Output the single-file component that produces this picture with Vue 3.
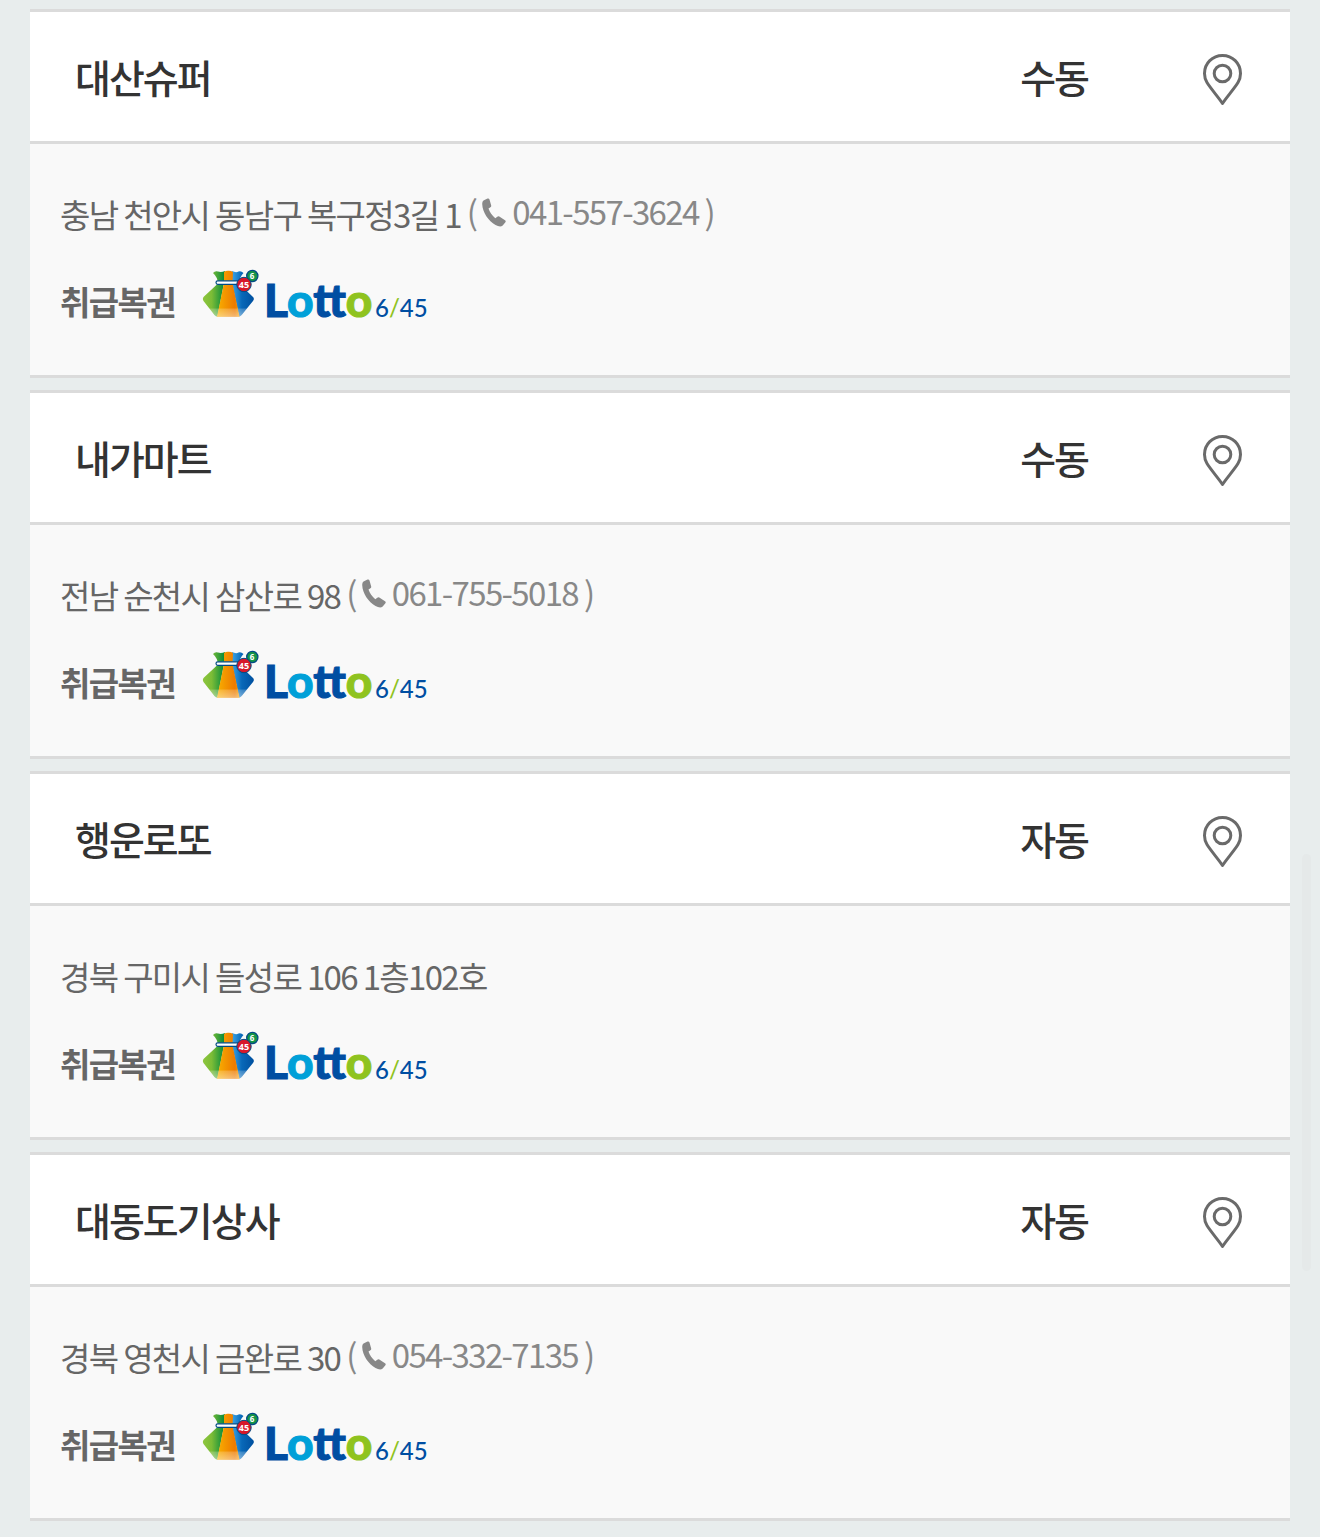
<template>
  <main class="store-page">
    <ul class="store-list">
      <li v-for="store in stores" :key="store.name" class="store-card">
        <div class="store-head">
          <h2 class="store-name">{{ store.name }}</h2>
          <span class="store-type">{{ store.type }}</span>
          <button type="button" class="map-btn" :aria-label="store.name + ' 지도'">
            <svg width="40" height="52" viewBox="0 0 40 52" fill="none" stroke="#6a6a6a" stroke-width="3">
              <path d="M20.500 49.5C17.500 44.500 9 35 5 28.500C3 25.200 2.500 22.500 2.500 19.500C2.500 9.200 10.500 1.500 20.500 1.500S38.500 9.200 38.500 19.500C38.500 22.500 38 25.200 36 28.500C32 35 23.500 44.500 20.500 49.500Z" stroke-linejoin="round" />
              <circle cx="20.500" cy="19.500" r="8.300" />
            </svg>
          </button>
        </div>

        <div class="store-body">
          <div class="address">
            <span>{{ store.address }}</span>
            <span v-if="store.phone" class="phone">
              <span>(</span>
              <a :href="'tel:' + store.phone">
                <svg width="24" height="32" viewBox="0 -3 24 32" fill="#888">
                  <path d="M1.500 2.500L5.500 0.500Q7 0 7.500 1.500L9.200 7.500Q9.400 8.700 8.400 9.300L6.500 10.600C7.800 14.500 10 17.500 13.300 20.200L15.300 18.700Q16.200 18 17.300 18.600L23 22.200Q24.200 23 23.400 24.200L20.700 27.400C19 29 16.500 28.500 13.500 27C6.500 23 0.500 14.500 0.200 6Q0.100 3.500 1.500 2.500Z" />
                </svg>
                <span>{{ store.phone }}</span>
              </a>
              <span>)</span>
            </span>
          </div>

          <div class="lottery">
            <strong class="lottery-label">취급복권</strong>
            <svg class="lotto-logo" width="224" height="52" viewBox="0 0 224 52" role="img" aria-label="Lotto 6/45">
              <defs>
                <linearGradient id="bag-green" x1="0" x2="1">
                  <stop offset="0" stop-color="#8ec63f" />
                  <stop offset="0.400" stop-color="#7cbc36" />
                  <stop offset="1" stop-color="#00883c" />
                </linearGradient>
                <linearGradient id="bag-orange" x1="0" x2="1">
                  <stop offset="0" stop-color="#f9b000" />
                  <stop offset="0.400" stop-color="#f39400" />
                  <stop offset="0.800" stop-color="#ec7a00" />
                  <stop offset="1" stop-color="#f6a000" />
                </linearGradient>
                <linearGradient id="bag-blue" x1="0" x2="1">
                  <stop offset="0" stop-color="#3ba4e6" />
                  <stop offset="0.450" stop-color="#0868b8" />
                  <stop offset="1" stop-color="#00509f" />
                </linearGradient>
                <linearGradient id="bag-shine" x1="0" x2="0" y1="0" y2="1">
                  <stop offset="0" stop-color="#fff" stop-opacity="0.200" />
                  <stop offset="1" stop-color="#fff" stop-opacity="0.450" />
                </linearGradient>
              </defs>
              <path d="M11 5Q13 2.500 16 3.500Q19 4.500 23 3L22 15L15.500 48.500Q14 48.500 12.500 47L1.500 33Q0 30.500 2 28.500L16 15.500Q15.500 9 11 5Z" fill="url(#bag-green)" />
              <path d="M30 3Q34 5 36.500 3.500Q39 2.500 41.500 5Q37.500 9 37 15.500L50.500 28.500Q53 30.500 51 33L40 46.500Q38.500 48.500 37 48.500L30 15Z" fill="url(#bag-blue)" />
              <path d="M22 4Q24 2.500 26.300 2.700Q29 2.500 31 4L30.500 15L37.500 48.700H15L22 15Z" fill="url(#bag-orange)" />
              <path d="M7 40.500H45L40 46.500Q38.500 48.700 37 48.700H15Q13.500 48.500 12 46.500Z" fill="url(#bag-shine)" />
              <rect x="14" y="12.800" width="24" height="3.600" rx="1.800" fill="#fff" stroke="#004b85" stroke-width="1.200" />
              <circle cx="50.300" cy="8" r="5.600" fill="#159447" stroke="#004b85" stroke-width="1.300" />
              <circle cx="42" cy="16.500" r="7.200" fill="#d7182a" stroke="#004b85" stroke-width="1" />
              <text x="50" y="11" class="ball-number" font-size="8">6</text>
              <text x="42" y="20" class="ball-number" font-size="9">45</text>
              <text x="62" y="49" class="logo-word"><tspan class="navy">L</tspan><tspan class="sky">o</tspan><tspan class="navy">tt</tspan><tspan class="lime">o</tspan></text>
              <text x="173" y="49" class="logo-number"><tspan class="navy">6</tspan><tspan class="lime">/</tspan><tspan class="navy">45</tspan></text>
            </svg>
          </div>
        </div>
      </li>
    </ul>
    <div class="scroll-thumb" aria-hidden="true"></div>
  </main>
</template>

<script setup>
const stores = [
  { name: '대산슈퍼', type: '수동', address: '충남 천안시 동남구 복구정3길 1', phone: '041-557-3624' },
  { name: '내가마트', type: '수동', address: '전남 순천시 삼산로 98', phone: '061-755-5018' },
  { name: '행운로또', type: '자동', address: '경북 구미시 들성로 106 1층102호', phone: '' },
  { name: '대동도기상사', type: '자동', address: '경북 영천시 금완로 30', phone: '054-332-7135' }
]
</script>

<style>
body {
  background: #e8eded;
}
</style>

<style scoped>
.store-page {
  padding: 9px 30px 16px;
  font-family: "Noto Sans CJK KR", "Noto Sans", sans-serif;
  font-size: 33px;
  letter-spacing: -0.05em;
  color: #666;
}

.store-list {
  display: flex;
  flex-direction: column;
  gap: 12px;
  margin: 0;
  padding: 0;
  list-style: none;
}

.store-card {
  border-top: 3px solid #dbdbdb;
  border-bottom: 3px solid #dbdbdb;
  background: #f9f9f9;
}

.store-head {
  display: flex;
  align-items: center;
  padding: 34px 48px 35px 45px;
  border-bottom: 3px solid #dbdbdb;
  background: #fff;
  color: #333;
  font-size: 39px;
  line-height: 60px;
  letter-spacing: -0.05em;
}

.store-name {
  flex: 1;
  margin: 0;
  font-size: inherit;
  font-weight: 500;
}

.store-type {
  margin-right: 114px;
  font-weight: 500;
}

.map-btn {
  display: flex;
  padding: 8px 0 0;
  border: 0;
  background: none;
  cursor: pointer;
}

.store-body {
  padding: 40px 30px 55px;
}

.address {
  display: flex;
  align-items: flex-start;
  gap: 6px;
  line-height: 60px;
}

.phone,
.phone a {
  display: flex;
  align-items: center;
  gap: 6px;
  color: #888;
  line-height: 54px;
  text-decoration: none;
}

.lottery {
  display: flex;
  align-items: flex-end;
  gap: 27px;
  margin-top: 24px;
}

.lottery-label {
  font-weight: 700;
  line-height: 38px;
}

.lotto-logo {
  flex-shrink: 0;
  overflow: visible;
  letter-spacing: normal;
}

.ball-number {
  fill: #fff;
  font-family: "Open Sans", sans-serif;
  font-weight: 700;
  text-anchor: middle;
}

.logo-word {
  font-family: Lato, sans-serif;
  font-size: 46px;
  font-weight: 900;
  stroke-width: 1px;
}

.logo-number {
  font-family: Lato, sans-serif;
  font-size: 24px;
  font-weight: 500;
}

.navy {
  fill: #004ea2;
}

.sky {
  fill: #00a0d8;
}

.lime {
  fill: #8fc31f;
}

.logo-word .navy {
  stroke: #004ea2;
}

.logo-word .sky {
  stroke: #00a0d8;
}

.logo-word .lime {
  stroke: #8fc31f;
}

.scroll-thumb {
  position: fixed;
  right: 9px;
  bottom: 266px;
  width: 9px;
  height: 417px;
  border-radius: 5px;
  background: #e5e9e9;
}
</style>
